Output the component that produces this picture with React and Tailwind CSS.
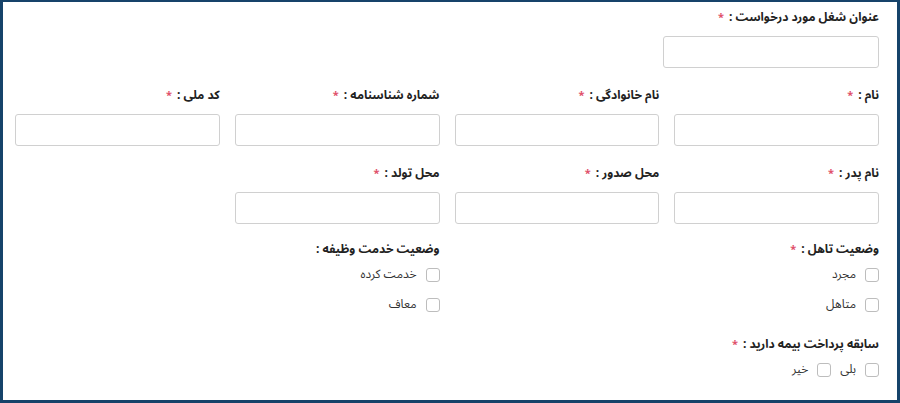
import React from "react";

const F = { fontFamily: "'Noto Sans Arabic', 'DejaVu Sans', sans-serif" };

function Label({ text, req = true }) {
  return (
    <div className="h-[20px] leading-[20px] text-[12px] font-bold text-[#222] whitespace-nowrap">
      {text}
      {req && <span className="text-[#e0506a] text-[11px] mr-[5px]">*</span>}
    </div>
  );
}

function Field({ text, req = true, wide = false }) {
  return (
    <div className={wide ? "flex flex-col w-[216px]" : "flex flex-col"}>
      <Label text={text} req={req} />
      <div className="mt-[8px] h-[32px] rounded-[3px] border border-[#d0d0d0] bg-white" />
    </div>
  );
}

function Check({ text }) {
  return (
    <div className="flex items-center gap-[9px] h-[30px]">
      <span className="w-[14px] h-[14px] rounded-[3px] border border-[#bdbdbd] bg-white" />
      <span className="text-[12px] text-[#333]">{text}</span>
    </div>
  );
}

export default function App() {
  return (
    <div className="w-[900px] h-[403px] bg-white" style={F}>
      <div
        dir="rtl"
        className="w-full h-full border-[#16436a] border-t-[2px] border-l-[3px] border-r-[3px] border-b-[3px] pr-[18px] pl-[12px] pt-[6px]"
      >
        <div className="flex">
          <Field text="عنوان شغل مورد درخواست :" wide />
        </div>
        <div className="grid grid-cols-4 gap-x-[15px] mt-[18px]">
          <Field text="نام :" />
          <Field text="نام خانوادگی :" />
          <Field text="شماره شناسنامه :" />
          <Field text="کد ملی :" />
        </div>
        <div className="grid grid-cols-4 gap-x-[15px] mt-[18px]">
          <Field text="نام پدر :" />
          <Field text="محل صدور :" />
          <Field text="محل تولد :" />
        </div>
        <div className="grid grid-cols-4 gap-x-[15px] mt-[16px]">
          <div className="flex flex-col">
            <Label text="وضعیت تاهل :" />
            <div>
              <Check text="مجرد" />
              <Check text="متاهل" />
            </div>
          </div>
          <div />
          <div className="flex flex-col">
            <Label text="وضعیت خدمت وظیفه :" req={false} />
            <div>
              <Check text="خدمت کرده" />
              <Check text="معاف" />
            </div>
          </div>
        </div>
        <div className="grid grid-cols-4 gap-x-[15px] mt-[15px]">
          <div className="flex flex-col">
            <Label text="سابقه پرداخت بیمه دارید :" />
            <div className="flex gap-[9px]">
              <Check text="بلی" />
              <Check text="خیر" />
            </div>
          </div>
        </div>
      </div>
    </div>
  );
}
